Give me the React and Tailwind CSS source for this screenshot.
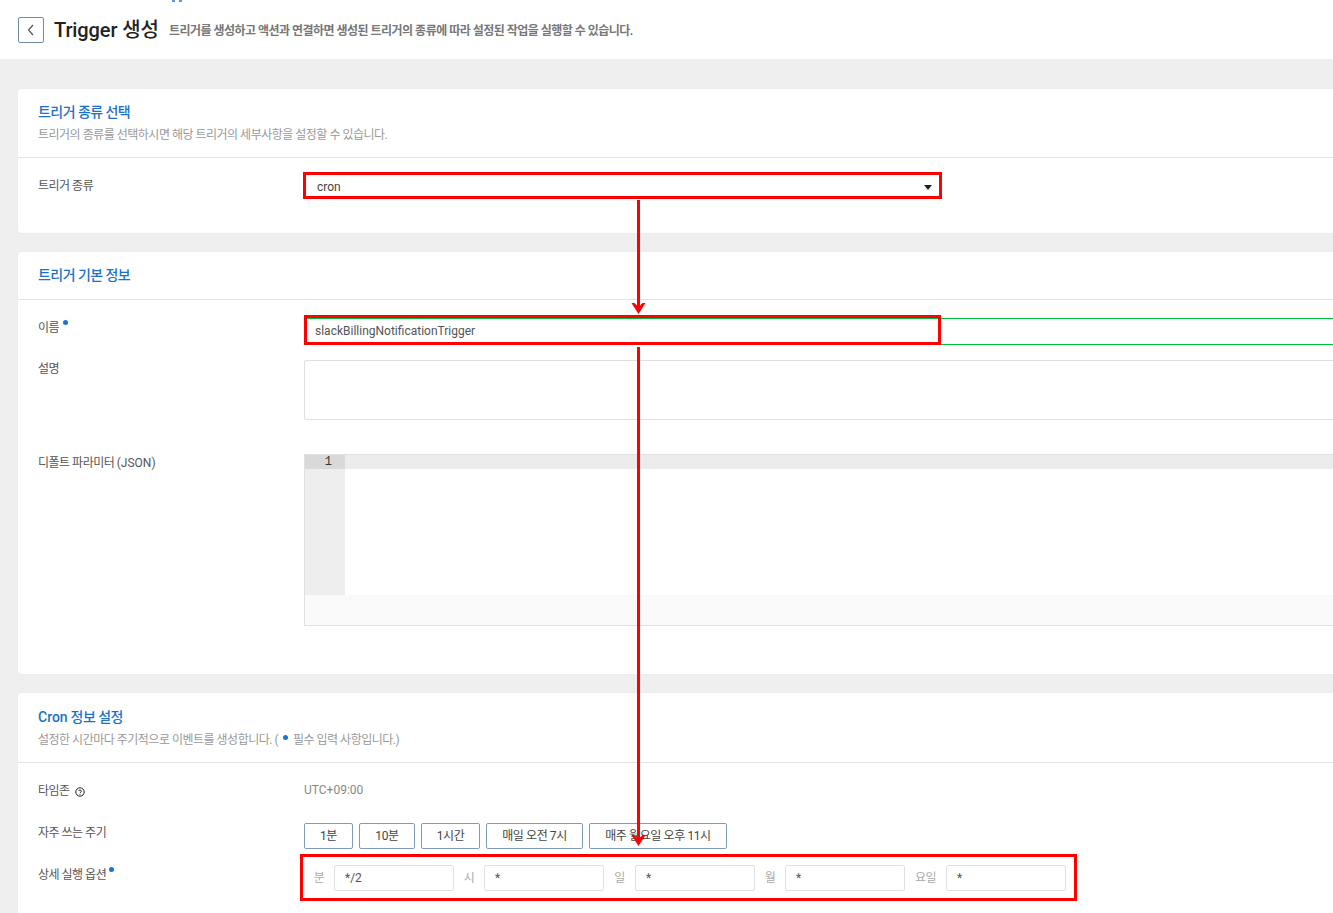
const FONT = "font-['Roboto','Noto_Sans_CJK_KR',sans-serif]";

function Dot({ className = "" }) {
  return <span className={`inline-block w-[5px] h-[5px] rounded-full bg-[#1a73d0] ${className}`} />;
}

function Latin({ children }) {
  return <span className="tracking-normal">{children}</span>;
}

function Card({ title, desc, headerH, children, className = "", pt = "pt-[14px]" }) {
  return (
    <section className={`ml-[18px] w-[1400px] bg-white rounded-[3px] shadow-[0_0_1px_rgba(0,0,0,0.15)] ${className}`}>
      <header className={`border-b border-[#e3e3e3] pl-5 ${pt} ${headerH}`}>
        <h2 className="text-[14px] leading-[18px] font-medium text-[#1a73c8] tracking-[-0.55px]">{title}</h2>
        {desc && <p className="mt-[5px] text-[12px] leading-[18px] text-[#999] tracking-[-0.5px]">{desc}</p>}
      </header>
      {children}
    </section>
  );
}

function Row({ label, h, children, labelClass = "pt-px" }) {
  return (
    <div className={`flex ${h}`}>
      <div className={`w-[286px] shrink-0 pl-5 text-[12px] leading-[16px] text-[#555] tracking-[-0.5px] ${labelClass}`}>{label}</div>
      <div className="flex-1 min-w-0">{children}</div>
    </div>
  );
}

function Quick({ w, children }) {
  return (
    <button className={`h-[26px] ${w} rounded-[2px] border border-[#7f9bb8] bg-white text-[12px] text-[#444] tracking-[-0.4px]`}>{children}</button>
  );
}

function Cell({ label, value, labelW }) {
  return (
    <div className="flex items-center">
      <span className={`${labelW} text-[12px] text-[#aaa] text-center tracking-[-0.5px]`}>{label}</span>
      <div className="h-[26px] w-[120px] rounded-[2px] border border-[#e0e0e0] pl-[10px] text-[12px] leading-[24px] text-[#555]">{value}</div>
    </div>
  );
}

function Arrow({ x, y1, y2 }) {
  return (
    <svg className="absolute left-0 top-0 pointer-events-none" width="1333" height="913" fill="#ff0000">
      <rect x={x - 1.5} y={y1} width="3" height={y2 - y1 - 6} />
      <path d={`M${x - 7} ${y2 - 11} L${x - 4} ${y2 - 11} L${x} ${y2 - 7} L${x + 4} ${y2 - 11} L${x + 7} ${y2 - 11} L${x} ${y2} Z`} />
    </svg>
  );
}

export default function App() {
  return (
    <div className={`relative w-[1333px] h-[913px] overflow-hidden bg-[#efefef] ${FONT}`}>
      <div className="h-[59px] bg-white flex items-center pl-[18px] relative">
        <span className="absolute left-[172px] top-0 w-[3px] h-[2px] bg-[#5a9be0]" />
        <span className="absolute left-[179px] top-0 w-[3px] h-[2px] bg-[#5a9be0]" />
        <button className="w-[26px] h-[26px] rounded-[2px] border border-[#6f8ba8] bg-white flex items-center justify-center">
          <svg width="12" height="12" viewBox="0 0 12 12" fill="none" stroke="#555" strokeWidth="1.2">
            <path d="M8 1 L3.5 6 L8 11" />
          </svg>
        </button>
        <h1 className="ml-[10px] text-[20px] leading-[26px] font-medium text-[#222] tracking-[-0.1px]">Trigger 생성</h1>
        <p className="ml-[10px] mt-[2px] text-[12px] leading-[18px] font-bold text-[#777] tracking-[-0.52px]">
          트리거를 생성하고 액션과 연결하면 생성된 트리거의 종류에 따라 설정된 작업을 실행할 수 있습니다.
        </p>
      </div>

      <div className="pt-[30px] flex flex-col gap-[19px]">
        <Card title="트리거 종류 선택" desc="트리거의 종류를 선택하시면 해당 트리거의 세부사항을 설정할 수 있습니다." headerH="h-[69px]">
          <Row label="트리거 종류" h="h-[75px] pt-[20px]" labelClass="pt-0">
            <div className="-mt-[5px] w-[638px] h-[26px] border border-[#e0e0e0] pl-[12px] pr-[9px] pt-[2px] flex items-center justify-between text-[12px] text-[#444]">
              cron
              <svg width="8" height="5" viewBox="0 0 8 5" fill="#222"><path d="M0 0H8L4 5Z" /></svg>
            </div>
          </Row>
        </Card>

        <Card title="트리거 기본 정보" headerH="h-[48px]" className="h-[422px]">
          <div className="pt-[18px]">
            <Row label={<span className="inline-flex items-start">이름<Dot className="ml-[4px] mt-0" /></span>} h="h-[42px]" labelClass="pt-[2px]">
              <div className="h-[27px] border-y border-[#00c040] pl-[11px] text-[12px] leading-[25px] text-[#555]">slackBillingNotificationTrigger</div>
            </Row>
            <Row label="설명" h="h-[94px]">
              <div className="h-[60px] border border-[#e0e0e0] rounded-[2px]" />
            </Row>
            <Row label={<>디폴트 파라미터 <Latin>(JSON)</Latin></>} h="h-[172px]">
              <div className="h-[172px] border border-[#e0e0e0] flex flex-col">
                <div className="flex h-[14px] bg-[#ececec]">
                  <div className="w-[40px] bg-[#d9d9d9] pr-[13px] text-right text-[12px] leading-[15px] font-['Liberation_Mono',monospace] text-[#333]">1</div>
                </div>
                <div className="h-[126px] w-[40px] bg-[#eee]" />
                <div className="flex-1 bg-[#fafafa]" />
              </div>
            </Row>
          </div>
        </Card>

        <Card
          pt="pt-[15px]"
          title={<><Latin>Cron</Latin> 정보 설정</>}
          desc={<span className="inline-flex items-center">설정한 시간마다 주기적으로 이벤트를 생성합니다. (<Dot className="mx-[5px] -mt-[6px]" />필수 입력 사항입니다.)</span>}
          headerH="h-[70px]"
          className="h-[260px]"
        >
          <div className="pt-[19px]">
            <Row
              label={<span className="inline-flex items-center gap-[5px]">타임존
                <svg width="10" height="10" viewBox="0 0 10 10" fill="none" stroke="#222" strokeWidth="1" className="mt-[2px]">
                  <circle cx="5" cy="5" r="4.2" />
                  <path d="M3.6 3.9c.2-1 2.8-1.1 2.8.3 0 1-1.4 1-1.4 2" />
                  <path d="M5 7v.8" />
                </svg></span>}
              h="h-[41px]"
            >
              <div className="text-[12px] leading-[16px] text-[#888]">UTC+09:00</div>
            </Row>
            <Row label="자주 쓰는 주기" h="h-[42px]" labelClass="pt-[2px]">
              <div className="flex gap-[6px]">
                <Quick w="w-[49px]">1분</Quick>
                <Quick w="w-[56px]">10분</Quick>
                <Quick w="w-[59px]">1시간</Quick>
                <Quick w="w-[97px]">매일 오전 7시</Quick>
                <Quick w="w-[138px]">매주 월요일 오후 11시</Quick>
              </div>
            </Row>
            <Row label={<span className="inline-flex items-start">상세 실행 옵션<Dot className="ml-[3px] mt-0" /></span>} h="h-[40px]" labelClass="pt-[2px]">
              <div className="flex">
                <Cell label="분" value="*/2" labelW="w-[30px]" />
                <Cell label="시" value="*" labelW="w-[30px]" />
                <Cell label="일" value="*" labelW="w-[31px]" />
                <Cell label="월" value="*" labelW="w-[30px]" />
                <Cell label="요일" value="*" labelW="w-[41px]" />
              </div>
            </Row>
          </div>
        </Card>
      </div>

      <div className="absolute left-[303px] top-[172px] w-[639px] h-[27px] border-[3px] border-[#ff0000]" />
      <div className="absolute left-[304px] top-[315px] w-[637px] h-[30px] border-[3px] border-[#ff0000]" />
      <div className="absolute left-[300px] top-[854px] w-[777px] h-[47px] border-[3px] border-[#ff0000]" />
      <Arrow x={638.5} y1={200} y2={314} />
      <Arrow x={638.5} y1={347} y2={846} />
    </div>
  );
}
